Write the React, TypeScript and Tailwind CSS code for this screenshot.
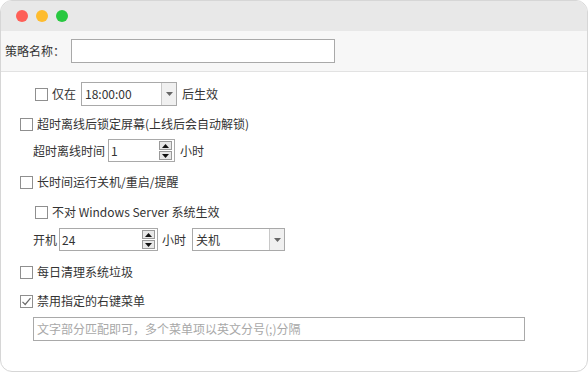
function Checkbox({ checked = false }: { checked?: boolean }) {
  return (
    <span className="flex h-[13px] w-[13px] shrink-0 items-center justify-center border border-[#8f8f8f] bg-white">
      {checked && (
        <svg width="11" height="11" viewBox="0 0 11 11">
          <path d="M1.5 5.8 L4.2 8.5 L9.5 2.2" fill="none" stroke="#6b6b6b" strokeWidth="1.2" />
        </svg>
      )}
    </span>
  );
}

function Combo({ value, width }: { value: string; width: string }) {
  return (
    <div className={`flex h-full ${width} border border-[#a9a9a9] bg-white`}>
      <span className="flex flex-1 items-center pl-[3px]">{value}</span>
      <span className="flex w-[15px] items-center justify-center border-l border-[#c8c8c8] bg-[#f0f0f0]">
        <svg width="7" height="4" viewBox="0 0 7 4">
          <path d="M0 0 H7 L3.5 4 Z" fill="#666" />
        </svg>
      </span>
    </div>
  );
}

function Spin({ value, width }: { value: string; width: string }) {
  return (
    <div className={`flex h-full ${width} border border-[#a9a9a9] bg-white`}>
      <span className="flex flex-1 items-center pl-[2px]">{value}</span>
      <div className="flex w-[15px] flex-col gap-px py-px pr-[2px]">
        <span className="flex flex-1 items-center justify-center border border-[#9a9a9a] bg-[#e8e8e8]">
          <svg width="7" height="4" viewBox="0 0 7 4">
            <path d="M0 4 H7 L3.5 0 Z" fill="#111" />
          </svg>
        </span>
        <span className="flex flex-1 items-center justify-center border border-[#9a9a9a] bg-[#e8e8e8]">
          <svg width="7" height="4" viewBox="0 0 7 4">
            <path d="M0 0 H7 L3.5 4 Z" fill="#111" />
          </svg>
        </span>
      </div>
    </div>
  );
}

export default function App() {
  return (
    <div
      className="flex h-[372px] w-[588px] flex-col overflow-hidden rounded-[12px] border border-[#d6d6d6] bg-white text-[12px] leading-[16px] text-[#333]"
      style={{ fontFamily: '"Noto Sans CJK SC", "Noto Sans", sans-serif' }}
    >
      {/* title bar */}
      <div className="flex h-[30px] shrink-0 items-center gap-[8px] bg-[#e8e8e8] pl-[15px]">
        <span className="h-[12px] w-[12px] rounded-full bg-[#fe5f57]" />
        <span className="h-[12px] w-[12px] rounded-full bg-[#febc2e]" />
        <span className="h-[12px] w-[12px] rounded-full bg-[#28c840]" />
      </div>

      {/* name */}
      <div className="flex h-[41px] shrink-0 items-center border-b border-[#e2e2e2] bg-[#f7f7f7] pl-[4px]">
        <span className="w-[66px]">策略名称：</span>
        <div className="h-[24px] w-[264px] border border-[#a9a9a9] bg-white" />
      </div>

      {/* options */}
      <div className="flex flex-col">
        <div className="mt-[10px] flex h-[24px] items-center pl-[34px]">
          <Checkbox />
          <span className="ml-[4px]">仅在</span>
          <div className="ml-[5px] h-full">
            <Combo value="18:00:00" width="w-[96px]" />
          </div>
          <span className="ml-[5px]">后生效</span>
        </div>

        <div className="mt-[8px] flex h-[20px] items-center pl-[19px]">
          <Checkbox />
          <span className="ml-[4px]">超时离线后锁定屏幕(上线后会自动解锁)</span>
        </div>

        <div className="mt-[5px] flex h-[23px] items-center pl-[32px]">
          <span>超时离线时间</span>
          <div className="ml-[3px] h-full">
            <Spin value="1" width="w-[67px]" />
          </div>
          <span className="ml-[5px]">小时</span>
        </div>

        <div className="mt-[10px] flex h-[20px] items-center pl-[19px]">
          <Checkbox />
          <span className="ml-[4px]">长时间运行关机/重启/提醒</span>
        </div>

        <div className="mt-[10px] flex h-[20px] items-center pl-[34px]">
          <Checkbox />
          <span className="ml-[4px]">不对 Windows Server 系统生效</span>
        </div>

        <div className="mt-[6px] flex h-[23px] items-center pl-[32px]">
          <span>开机</span>
          <div className="ml-[2px] h-full">
            <Spin value="24" width="w-[99px]" />
          </div>
          <span className="ml-[4px]">小时</span>
          <div className="ml-[6px] h-full">
            <Combo value="关机" width="w-[93px]" />
          </div>
        </div>

        <div className="mt-[11px] flex h-[20px] items-center pl-[19px]">
          <Checkbox />
          <span className="ml-[4px]">每日清理系统垃圾</span>
        </div>

        <div className="mt-[9px] flex h-[20px] items-center pl-[19px]">
          <Checkbox checked />
          <span className="ml-[4px]">禁用指定的右键菜单</span>
        </div>

        <div className="ml-[32px] mt-[6px] flex h-[24px] w-[492px] items-center border border-[#a9a9a9] bg-white pl-[3px] text-[#a8a8a8]">
          文字部分匹配即可，多个菜单项以英文分号(;)分隔
        </div>
      </div>
    </div>
  );
}
